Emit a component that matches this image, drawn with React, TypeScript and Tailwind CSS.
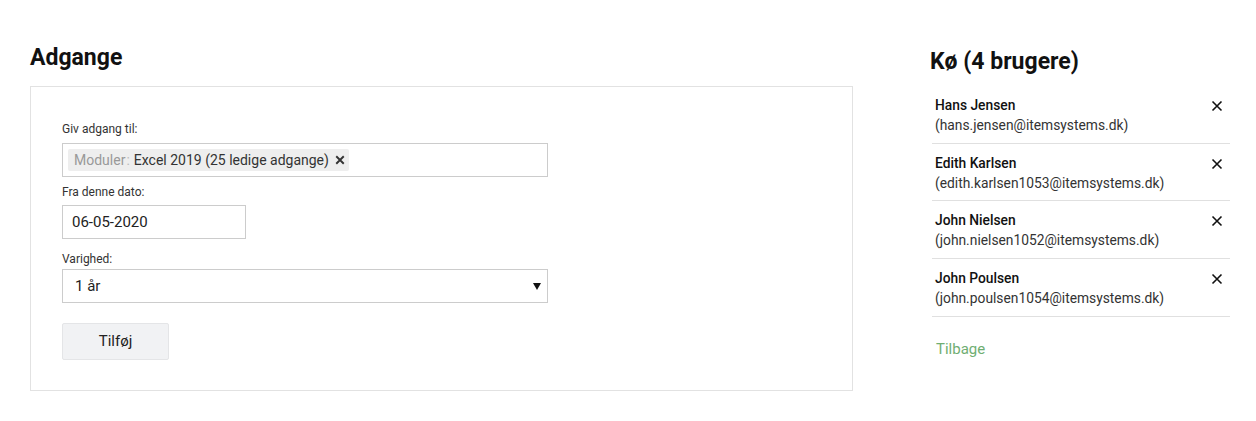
const users = [
  { name: "Hans Jensen", email: "hans.jensen@itemsystems.dk" },
  { name: "Edith Karlsen", email: "edith.karlsen1053@itemsystems.dk" },
  { name: "John Nielsen", email: "john.nielsen1052@itemsystems.dk" },
  { name: "John Poulsen", email: "john.poulsen1054@itemsystems.dk" },
];

const CloseIcon = ({ className = "", stroke = 1.6 }: { className?: string; stroke?: number }) => (
  <svg viewBox="0 0 12 12" className={className} fill="none">
    <path d="M1.5 1.5l9 9M10.5 1.5l-9 9" stroke="currentColor" strokeWidth={stroke} />
  </svg>
);

const Label = ({ children, className = "" }: { children: React.ReactNode; className?: string }) => (
  <div className={`text-[12px] leading-4 text-[#333] ${className}`}>{children}</div>
);

const App = () => {
  return (
    <div
      className="flex w-[1256px] h-[421px] bg-white text-[#222]"
      style={{ fontFamily: "Roboto, 'Liberation Sans', sans-serif" }}
    >
      {/* left: adgange */}
      <div className="ml-[30px] pt-[43px] w-[823px]">
        <h1 className="text-[23px] leading-[30px] font-bold text-[#111]">Adgange</h1>
        <div className="mt-[13px] border border-[#e2e2e2] pl-[31px] pt-[34px] pb-[30px]">
          <Label className="mb-[6px]">Giv adgang til:</Label>
          <div className="w-[486px] h-[34px] border border-[#cccccc] flex items-center px-[5px]">
            <div className="flex items-center h-[22px] bg-[#eeeeee] rounded-[2px] pl-[6px] pr-[4px] text-[14px]">
              <span className="text-[#999]">Moduler</span>
              <span className="text-[#bbb] ml-[1px] mr-[4px]">:</span>
              <span className="text-[#333]">Excel 2019 (25 ledige adgange)</span>
              <CloseIcon className="w-[10px] h-[10px] ml-[6px] text-[#333]" stroke={2.3} />
            </div>
          </div>

          <Label className="mt-[7px] mb-[5px]">Fra denne dato:</Label>
          <div className="w-[184px] h-[34px] border border-[#cccccc] flex items-center pl-[9px] text-[15px] text-[#222]">
            06-05-2020
          </div>

          <Label className="mt-[12px] mb-[2px]">Varighed:</Label>
          <div className="w-[486px] h-[34px] border border-[#cccccc] flex items-center justify-between pl-[12px] pr-[6px] text-[15px] text-[#222]">
            <span>1 år</span>
            <svg viewBox="0 0 8 7" className="w-[8px] h-[7px]">
              <path d="M0 0h8L4 7z" fill="#111" />
            </svg>
          </div>

          <button className="mt-[20px] w-[107px] h-[37px] bg-[#f1f2f4] border border-[#e4e5e7] rounded-[2px] text-[15px] text-[#222]">
            Tilføj
          </button>
        </div>
      </div>

      {/* right: kø */}
      <div className="ml-[77px] pt-[47px] w-[300px]">
        <h2 className="text-[23px] leading-[30px] font-bold text-[#111]">Kø (4 brugere)</h2>
        <ul className="mt-[9px] ml-[2px] w-[298px]">
          {users.map((u) => (
            <li
              key={u.email}
              className="flex justify-between border-b border-[#e0e0e0] pl-[3px] pr-[7px] pt-[9px] pb-[7.67px]"
            >
              <div className="text-[13.8px] leading-5">
                <div className="font-medium text-[#111]">{u.name}</div>
                <div className="text-[#333]">({u.email})</div>
              </div>
              <CloseIcon className="w-[12px] h-[12px] mt-[5px] text-[#111]" />
            </li>
          ))}
        </ul>
        <div className="mt-[22px] ml-[6px] text-[15px] leading-5 text-[#6fae72]">Tilbage</div>
      </div>
    </div>
  );
};

export default App;
